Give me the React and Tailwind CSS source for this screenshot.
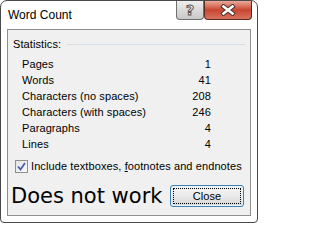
import React from "react";

const rows = [
  ["Pages", "1"],
  ["Words", "41"],
  ["Characters (no spaces)", "208"],
  ["Characters (with spaces)", "246"],
  ["Paragraphs", "4"],
  ["Lines", "4"],
];

function HelpButton() {
  return (
    <div className="w-[28px] h-[19px] border border-t-0 border-[#6f6f6f] rounded-b-[4px] bg-gradient-to-b from-[#eeeeee] via-[#dadada] to-[#c8c8c8] flex items-center justify-center">
      <span
        className="text-[14px] font-bold leading-none text-[#f4f4f4] font-['DejaVu_Sans',sans-serif]"
        style={{ WebkitTextStroke: "1px #555" }}
      >
        ?
      </span>
    </div>
  );
}

function CloseButton() {
  return (
    <div className="w-[48px] h-[19px] border border-t-0 border-[#5a2a22] rounded-b-[4px] bg-gradient-to-b from-[#e9a898] via-[#c8452f] to-[#d7735f] flex items-center justify-center">
      <svg width="16" height="12" viewBox="0 0 16 12">
        <path d="M3.5 2.5 L12.5 9.5 M12.5 2.5 L3.5 9.5" stroke="#4a3430" strokeWidth="4.5" strokeLinecap="square" />
        <path d="M3.5 2.5 L12.5 9.5 M12.5 2.5 L3.5 9.5" stroke="#ffffff" strokeWidth="2.5" strokeLinecap="square" />
      </svg>
    </div>
  );
}

export default function App() {
  return (
    <div className="w-[258px] h-[223px] bg-white border border-[#4a4a4a] rounded-t-[7px] rounded-b-[4px] flex flex-col overflow-hidden font-['Liberation_Sans',sans-serif]">
      <div className="h-[28px] flex items-start shrink-0">
        <p className="pl-[7px] pt-[7px] text-[12px] leading-[15px] text-black">
          Word Count
        </p>
        <div className="ml-auto mr-[5px] flex">
          <HelpButton />
          <CloseButton />
        </div>
      </div>

      <div className="mx-[6px] h-[187px] border border-[#8e8f8f] bg-[#f0f0f0] flex flex-col text-[11px] tracking-[0.1px] text-black">
        <div className="mt-[6px] h-[16px] flex items-center pl-[5px] pr-[5px]">
          <span>Statistics:</span>
          <div className="ml-[6px] flex-1 h-[1px] bg-[#d5dfe5]"></div>
        </div>

        <div className="mt-[4px] flex flex-col pl-[14px] pr-[39px]">
          {rows.map(([label, value]) => (
            <div key={label} className="h-[16px] flex items-center justify-between">
              <span>{label}</span>
              <span>{value}</span>
            </div>
          ))}
        </div>

        <div className="mt-[6px] h-[16px] flex items-center pl-[7px]">
          <div className="w-[13px] h-[13px] border border-[#8f8f8f] bg-gradient-to-br from-[#e4e4e4] to-[#fafafa] flex items-center justify-center">
            <svg width="9" height="9" viewBox="0 0 9 9">
              <path d="M1 4.5 L3.5 7.5 L8 1" fill="none" stroke="#4a5fa8" strokeWidth="1.8" />
            </svg>
          </div>
          <span className="ml-[3px]">
            Include textboxes, <span className="underline">f</span>ootnotes and endnotes
          </span>
        </div>

        <div className="mt-[10px] flex items-center pl-[3px]">
          <span className="text-[21px] leading-[24px] tracking-normal font-['DejaVu_Sans',sans-serif]">
            Does not work
          </span>
          <div className="ml-auto mr-[6px] w-[74px] h-[22px] rounded-[3px] border border-[#3c7fb1] p-[1px] bg-[#e5f4fc]">
            <div className="w-full h-full rounded-[2px] bg-gradient-to-b from-[#f2f2f2] via-[#ebebeb] to-[#d6d6d6] p-[1px]">
              <div className="w-full h-full border border-dotted border-black flex items-center justify-center">
                Close
              </div>
            </div>
          </div>
        </div>
      </div>
    </div>
  );
}
